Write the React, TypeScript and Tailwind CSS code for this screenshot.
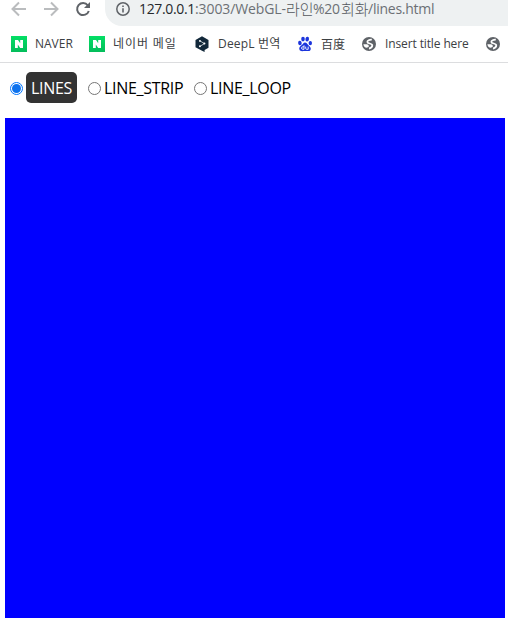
import type { ReactNode } from "react";

function Seg({ className, children }: { className: string; children: ReactNode }) {
  return <span className={`block shrink-0 whitespace-nowrap ${className}`}>{children}</span>;
}

function NaverIcon() {
  return (
    <svg className="block size-4 shrink-0" viewBox="0 0 16 16">
      <defs>
        <linearGradient id="naver" x1="0" y1="0" x2="0" y2="1">
          <stop offset="0" stopColor="#03df65" />
          <stop offset="1" stopColor="#04bd5b" />
        </linearGradient>
      </defs>
      <path fill="url(#naver)" d="M0 0h16v16H0z" />
      <path fill="#fff" d="M4 4h3l2.2 3.3V4H12v8H9.2L6.8 8.6V12H4z" />
    </svg>
  );
}

function DeepLIcon() {
  return (
    <svg className="block size-4 shrink-0" viewBox="0 0 16 16">
      <path fill="#12283a" d="M8 0.2 14.5 3.9v7.8L10.6 14v2L8 14.8 1.5 11.2V3.9z" />
      <path d="M6 4.9 10.4 7.6 6 10.3" fill="none" stroke="#dfe4e8" strokeWidth="0.8" />
      <circle cx="5.9" cy="4.9" r="0.95" fill="#fff" />
      <circle cx="10.4" cy="7.6" r="1" fill="#fff" />
      <circle cx="5.9" cy="10.3" r="0.95" fill="#fff" />
    </svg>
  );
}

function BaiduIcon() {
  return (
    <svg className="block size-4 shrink-0" viewBox="0 0 16 16">
      <g fill="#1c35dc">
        <ellipse cx="2.9" cy="7" rx="1.8" ry="2.2" transform="rotate(-10 2.9 7)" />
        <ellipse cx="6" cy="3.1" rx="1.8" ry="2.4" />
        <ellipse cx="10.2" cy="3.2" rx="1.8" ry="2.4" transform="rotate(12 10.2 3.2)" />
        <ellipse cx="13.3" cy="7.1" rx="1.7" ry="2.2" />
        <path d="M8 6.4c1.8 0 2.3 1.9 3.7 3.1 1.6 1.3 2.500 2.600 1.900 4.200-.8 1.900-3.400 1.300-5.600 1.300s-4.600.8-5.500-1.200c-.7-1.500 0-3 1.600-4.200C5.8 8.400 6.200 6.400 8 6.400z" />
      </g>
      <path
        d="M7 9.300v4H5.800a1.200 1.200 0 0 1 0-2.500H7M8.700 10.600v1.800q0 .9 1 .9h1.500v-2.700"
        fill="none"
        stroke="#fff"
        strokeWidth="0.9"
      />
    </svg>
  );
}

function GlobeIcon() {
  return (
    <svg className="block size-4 shrink-0" viewBox="0 0 16 16">
      <circle cx="8" cy="8" r="7" fill="#5f6368" />
      <path
        d="M10.800 3.700C8.500 3.600 6.300 4.300 6.300 5.900c0 2 4.700 1.100 5 3.100.2 1.700-1.300 3-3.300 3.600"
        fill="none"
        stroke="#fff"
        strokeWidth="1.700"
      />
      <path fill="#fff" d="M2.400 8.200h3.200c1.500 0 2.400.8 2.100 2l-.8 1.100-1.200.5C4 11.500 2.400 10.200 2.400 8.200z" />
    </svg>
  );
}

function Radio({ checked = false }: { checked?: boolean }) {
  return (
    <span
      className={`mt-[2px] flex size-[13px] shrink-0 items-center justify-center rounded-full border bg-white ${
        checked ? "border-[#0075ff]" : "border-[#767676]"
      }`}
    >
      {checked && <span className="size-[9px] rounded-full bg-[#0d72ed]" />}
    </span>
  );
}

export default function App() {
  return (
    <div className="h-[620px] w-[508px] overflow-hidden bg-white font-['Open_Sans','Noto_Sans_CJK_KR',sans-serif]">
      <div className="flex h-[26px] items-start">
        <svg className="block h-[26px] w-[105px] shrink-0" viewBox="0 0 105 26" fill="none">
          <path d="M26 9H13M19 2.500 12.500 9 19 15.500" stroke="#babcbe" strokeWidth="2" />
          <path d="M44 9h13M51 2.500 57.500 9 51 15.500" stroke="#babcbe" strokeWidth="2" />
          <path d="M87.800 5.300A6 6 0 1 0 88.800 11" stroke="#5f6368" strokeWidth="2" />
          <path d="M90 2v6h-6z" fill="#5f6368" />
        </svg>
        <div className="flex h-[26px] flex-1 items-start rounded-bl-[17px] bg-[#eef1f2] pl-[11px] text-[14px] leading-[18px] text-[#6c7075]">
          <svg className="mt-[2px] mr-[9px] block size-[14px] shrink-0" viewBox="0 0 14 14">
            <circle cx="7" cy="7" r="6.200" fill="none" stroke="#5f6368" strokeWidth="1.500" />
            <path fill="#5f6368" d="M6.200 6.200h1.600v4.300H6.200zM6.200 3.500h1.600v1.600H6.200z" />
          </svg>
          <Seg className="w-[56px] tracking-[-0.35px] text-[#25282c]">127.0.0.1</Seg>
          <Seg className="w-[91px] tracking-[-0.1px]">:3003/WebGL-</Seg>
          <Seg className="w-[27px] text-[15px] font-light text-[#54585d]">라인</Seg>
          <Seg className="w-[28px] tracking-[-0.3px]">%20</Seg>
          <Seg className="w-[27px] text-[15px] font-light text-[#54585d]">회화</Seg>
          <Seg className="tracking-[-0.25px]">/lines.html</Seg>
        </div>
      </div>
      <div className="flex h-[37px] items-center border-b border-[#dcdddf] pl-[11px] text-[12px] leading-[16px] text-[#3c4043]">
        <NaverIcon />
        <Seg className="ml-2 w-[54px]">NAVER</Seg>
        <NaverIcon />
        <Seg className="ml-[8px] w-[81px] tracking-[0.9px]">네이버 메일</Seg>
        <DeepLIcon />
        <Seg className="ml-2 w-[79px] tracking-[0.2px]">DeepL 번역</Seg>
        <BaiduIcon />
        <Seg className="ml-2 w-[40px] font-['Noto_Sans_CJK_SC',sans-serif]">百度</Seg>
        <GlobeIcon />
        <Seg className="ml-2 w-[100px] tracking-[-0.12px]">Insert title here</Seg>
        <GlobeIcon />
      </div>
      <div className="flex h-[55px] items-start pt-[9px] pl-[10px] text-[16px] leading-[33px] text-black">
        <div className="flex h-[31px] items-center">
          <Radio checked />
          <span className="ml-[3px] h-[31px] w-[51px] rounded-[5px] bg-[#333] pl-[5px] tracking-[-0.3px] whitespace-nowrap text-white">
            LINES
          </span>
        </div>
        <div className="ml-[11px] flex h-[31px] w-[106px] items-center">
          <Radio />
          <Seg className="mt-[2px] ml-[3px] leading-[31px] tracking-[-0.3px]">LINE_STRIP</Seg>
        </div>
        <div className="flex h-[31px] items-center">
          <Radio />
          <Seg className="mt-[2px] ml-[3px] leading-[31px] tracking-[-0.3px]">LINE_LOOP</Seg>
        </div>
      </div>
      <div className="ml-[5px] size-[500px] bg-[#0000ff]" />
    </div>
  );
}
